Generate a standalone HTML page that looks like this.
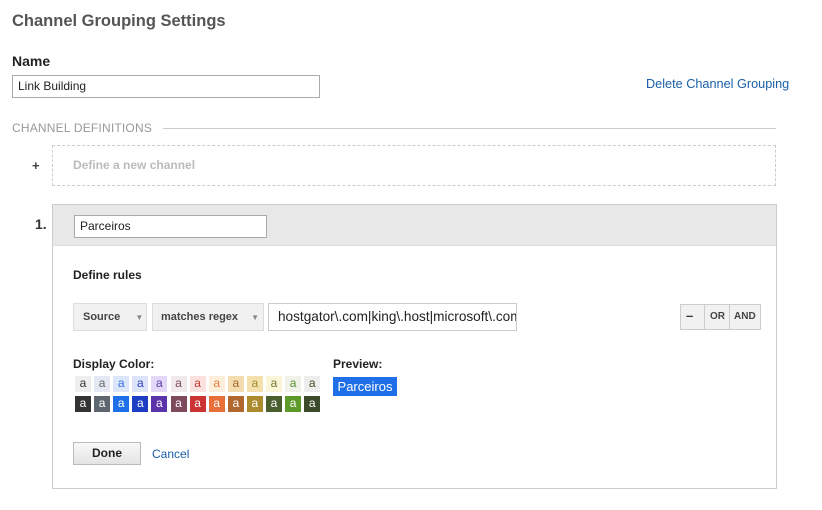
<!DOCTYPE html>
<html><head><style>
body{margin:0;width:822px;height:510px;background:#fff;font-family:"Liberation Sans",Arial,sans-serif;position:relative;overflow:hidden;color:#222}
.a{position:absolute}
h1{position:absolute;left:12px;top:12px;margin:0;font-size:16.5px;font-weight:bold;color:#555}
.inp{position:absolute;border:1px solid #aaa;background:#fff;font-size:12px;box-sizing:border-box;padding-left:5px;color:#222}
.btn{position:absolute;background:#f1f1f1;border:1px solid #ddd;box-sizing:border-box;font-size:11px;font-weight:bold;color:#444}
.sw{position:absolute;width:16px;height:16px;font-size:12px;text-align:center;line-height:15px}
</style></head><body>
<h1>Channel Grouping Settings</h1>
<div class="a" style="left:12px;top:53px;font-size:14px;font-weight:bold">Name</div>
<div class="inp" style="left:12px;top:75px;width:308px;height:23px;line-height:21px">Link Building</div>
<div class="a" style="left:646px;top:77px;font-size:12.7px;color:#1a5fa8">Delete Channel Grouping</div>
<div class="a" style="left:12px;top:121px;font-size:12px;color:#999;letter-spacing:.2px">CHANNEL DEFINITIONS</div>
<div class="a" style="left:163px;top:128px;width:613px;height:1px;background:#ccc"></div>
<div class="a" style="left:32px;top:158px;font-size:13px;font-weight:bold;color:#444">+</div>
<div class="a" style="left:52px;top:145px;width:722px;height:39px;border:1px dashed #ccc"></div>
<div class="a" style="left:73px;top:158px;font-size:12px;font-weight:bold;color:#bbb">Define a new channel</div>
<div class="a" style="left:35px;top:216px;font-size:14px;font-weight:bold;color:#333">1.</div>
<div class="a" style="left:52px;top:204px;width:723px;height:283px;border:1px solid #ccc"></div>
<div class="a" style="left:53px;top:205px;width:723px;height:40px;background:#e8e8e8;border-bottom:1px solid #ddd"></div>
<div class="inp" style="left:74px;top:215px;width:193px;height:23px;line-height:21px">Parceiros</div>
<div class="a" style="left:73px;top:268px;font-size:12px;font-weight:bold">Define rules</div>
<div class="btn" style="left:73px;top:303px;width:74px;height:28px;line-height:26px;padding-left:9px">Source <span style="margin-left:12px;font-size:8px;color:#888">▼</span></div>
<div class="btn" style="left:152px;top:303px;width:112px;height:28px;line-height:26px;padding-left:8px">matches regex <span style="margin-left:10px;font-size:8px;color:#888">▼</span></div>
<div class="inp" style="left:268px;top:303px;width:249px;height:28px;line-height:26px;padding-left:9px;font-size:13.6px;overflow:hidden;white-space:nowrap;border-color:#ccc">hostgator\.com|king\.host|microsoft\.com</div>
<div class="btn" style="left:680px;top:304px;width:81px;height:26px;border-color:#ccc"></div>
<div class="a" style="left:686px;top:308px;font-size:13px;font-weight:bold;color:#333">–</div>
<div class="a" style="left:704px;top:304px;width:1px;height:26px;background:#ccc"></div>
<div class="a" style="left:710px;top:311px;font-size:10px;font-weight:bold;color:#444">OR</div>
<div class="a" style="left:729px;top:304px;width:1px;height:26px;background:#ccc"></div>
<div class="a" style="left:734px;top:311px;font-size:10px;font-weight:bold;color:#444">AND</div>
<div class="a" style="left:73px;top:357px;font-size:12px;font-weight:bold">Display Color:</div>
<div class="a" style="left:333px;top:357px;font-size:12px;font-weight:bold">Preview:</div>
<div class="a" style="left:333px;top:377px;width:64px;height:19px;background:#1f6fe8;color:#fff;font-size:13px;line-height:19px;text-align:center">Parceiros</div>
<div id="sw"></div>
<script>
var r1=[["#eee","#333"],["#e4e8f4","#666"],["#dce6fb","#3b6fe0"],["#dde4fa","#2a3fb5"],["#e3d8f8","#5b3aa5"],["#f1e9ec","#7a4a5b"],["#fbe0e0","#c0392b"],["#fdeedc","#e67e3a"],["#f3dcb0","#a0672b"],["#f2e0ad","#a58a2d"],["#fbf5d8","#6b7a2b"],["#f0f2ea","#5c8f2a"],["#ededed","#3d4d2b"]];
var r2=["#333","#5e6670","#1f6fe8","#1d3ec2","#5a34a8","#7d4a5e","#cc3333","#e8703a","#b0682e","#ad8c2f","#4a5e2e","#5d9a2a","#3a4a2a"];
var h="";for(var i=0;i<13;i++){var x=75+i*19.1;h+='<div class="sw" style="left:'+x+'px;top:376px;background:'+r1[i][0]+';color:'+r1[i][1]+'">a</div>';h+='<div class="sw" style="left:'+x+'px;top:396px;background:'+r2[i]+';color:#fff">a</div>';}
document.getElementById("sw").innerHTML=h;
</script>
<div class="btn" style="left:73px;top:442px;width:68px;height:23px;line-height:21px;text-align:center;font-size:12px;color:#222;border-color:#bbb;background:linear-gradient(#f8f8f8,#e4e4e4)">Done</div>
<div class="a" style="left:152px;top:447px;font-size:12px;color:#1a5fa8">Cancel</div>
</body></html>
